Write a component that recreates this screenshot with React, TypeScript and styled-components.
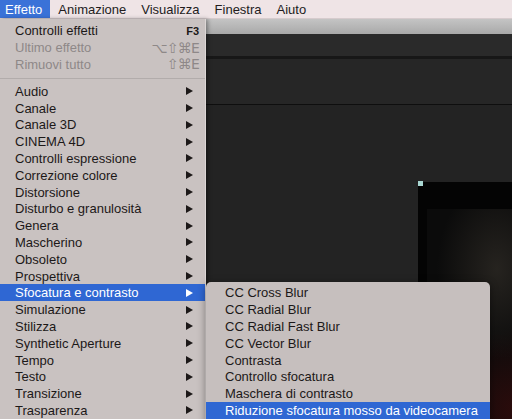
import React from 'react';
import styled, { createGlobalStyle } from 'styled-components';

const GlobalStyle = createGlobalStyle`
    html, body {
        margin: 0;
        padding: 0;
        background: #232323;
    }
    body {
        font-family: 'Liberation Sans', Arial, sans-serif;
        -webkit-font-smoothing: antialiased;
    }
`;

const Screen = styled.div`
    position: relative;
    display: flex;
    flex-direction: column;
    width: 512px;
    height: 419px;
    overflow: hidden;
`;

const MenuBar = styled.div`
    display: flex;
    align-items: stretch;
    height: 19px;
    background: #efe4e6;
    border-bottom: 1px solid #d6cbcd;
    box-sizing: border-box;
`;

const BarItem = styled.div<{ $active?: boolean }>`
    display: flex;
    align-items: center;
    padding: ${(p) => (p.$active ? '0 8px 0 5px' : '0')};
    margin-right: ${(p) => (p.$active ? '8px' : '15px')};
    font-size: 13px;
    color: ${(p) => (p.$active ? '#ffffff' : '#231c1d')};
    background: ${(p) => (p.$active ? '#3a72d8' : 'transparent')};
`;

const AppWindow = styled.div`
    flex: 1;
    display: flex;
    flex-direction: column;
`;

const TitleBar = styled.div`
    height: 15px;
    background: linear-gradient(#c4c4c4, #a9a9a9);
`;

const Toolbar = styled.div`
    height: 22px;
    background: #2a2a2a;
`;

const ToolbarEdge = styled.div`
    height: 3px;
    background: #171717;
`;

const Panel = styled.div`
    height: 45px;
    background: #262626;
    border-bottom: 1px solid #0e0e0e;
`;

const Workspace = styled.div`
    flex: 1;
    display: flex;
    padding: 77px 0 0 418px;
    background: #232323;
`;

const Composition = styled.div`
    position: relative;
    flex: 1;
    display: flex;
    padding: 27px 0 0 9px;
    background: #040404;
`;

const Handle = styled.div`
    position: absolute;
    left: 0;
    top: -1px;
    width: 5px;
    height: 5px;
    background: #a9d6d2;
`;

const Footage = styled.div`
    flex: 1;
    background:
        radial-gradient(ellipse 60px 90px at 70px 60px, rgba(60, 55, 48, 0.55), transparent),
        radial-gradient(ellipse 90px 80px at 90px 200px, rgba(70, 12, 12, 0.55), transparent),
        #0b0b0b;
`;

const Dropdown = styled.div`
    position: absolute;
    left: 0;
    top: 19px;
    width: 206px;
    height: 410px;
    padding-top: 3.5px;
    box-sizing: border-box;
    background: #c9c2c1;
    border-right: 1px solid #dcd6d5;
    box-shadow: 2px 0 4px rgba(0, 0, 0, 0.35);
`;

const SubMenu = styled.div`
    position: absolute;
    left: 206px;
    top: 282px;
    width: 284px;
    height: 160px;
    padding-top: 2.5px;
    box-sizing: border-box;
    background: #c6bfbe;
    border-radius: 5px;
    box-shadow: 0 2px 8px rgba(0, 0, 0, 0.45);
`;

const Row = styled.div<{ $selected?: boolean; $disabled?: boolean; $indent: number }>`
    display: flex;
    align-items: center;
    height: 16.8px;
    padding: 0 6px 0 ${(p) => p.$indent}px;
    font-size: 13px;
    white-space: nowrap;
    color: ${(p) => (p.$selected ? '#ffffff' : p.$disabled ? '#8e8888' : '#1c1818')};
    background: ${(p) => (p.$selected ? '#2f67d3' : 'transparent')};
`;

const Label = styled.span`
    flex: 1;
`;

const Shortcut = styled.span<{ $bold?: boolean }>`
    font-family: ${(p) => (p.$bold ? "'Liberation Sans', Arial, sans-serif" : "'DejaVu Sans', sans-serif")};
    font-size: ${(p) => (p.$bold ? '11px' : '14px')};
    font-weight: ${(p) => (p.$bold ? 700 : 400)};
    letter-spacing: ${(p) => (p.$bold ? '0' : '-0.8px')};
`;

const Arrow = styled.svg`
    width: 7px;
    height: 8px;
    margin-right: 6px;
    flex: none;
`;

const Separator = styled.div`
    height: 10px;
    display: flex;
    align-items: center;

    &::after {
        content: '';
        flex: 1;
        height: 1px;
        margin-top: 2px;
        background: #b2acab;
    }
`;

const topItems = [
    { label: 'Controlli effetti', shortcut: 'F3', bold: true },
    { label: 'Ultimo effetto', shortcut: '⌥⇧⌘E', disabled: true },
    { label: 'Rimuovi tutto', shortcut: '⇧⌘E', disabled: true },
];

const categories = [
    'Audio',
    'Canale',
    'Canale 3D',
    'CINEMA 4D',
    'Controlli espressione',
    'Correzione colore',
    'Distorsione',
    'Disturbo e granulosità',
    'Genera',
    'Mascherino',
    'Obsoleto',
    'Prospettiva',
    'Sfocatura e contrasto',
    'Simulazione',
    'Stilizza',
    'Synthetic Aperture',
    'Tempo',
    'Testo',
    'Transizione',
    'Trasparenza',
];

const blurEffects = [
    'CC Cross Blur',
    'CC Radial Blur',
    'CC Radial Fast Blur',
    'CC Vector Blur',
    'Contrasta',
    'Controllo sfocatura',
    'Maschera di contrasto',
    'Riduzione sfocatura mosso da videocamera',
];

function SubArrow({ color }: { color: string }) {
    return (
        <Arrow viewBox="0 0 7 8">
            <path d="M0 0 L7 4 L0 8 Z" fill={color} />
        </Arrow>
    );
}

export default function App() {
    return (
        <Screen>
            <GlobalStyle />
            <MenuBar>
                <BarItem $active>Effetto</BarItem>
                <BarItem>Animazione</BarItem>
                <BarItem>Visualizza</BarItem>
                <BarItem>Finestra</BarItem>
                <BarItem>Aiuto</BarItem>
            </MenuBar>
            <AppWindow>
                <TitleBar />
                <Toolbar />
                <ToolbarEdge />
                <Panel />
                <Workspace>
                    <Composition>
                        <Handle />
                        <Footage />
                    </Composition>
                </Workspace>
            </AppWindow>

            <Dropdown>
                {topItems.map((item) => (
                    <Row key={item.label} $indent={15} $disabled={item.disabled}>
                        <Label>{item.label}</Label>
                        <Shortcut $bold={item.bold}>{item.shortcut}</Shortcut>
                    </Row>
                ))}
                <Separator />
                {categories.map((name) => {
                    const selected = name === 'Sfocatura e contrasto';
                    return (
                        <Row key={name} $indent={15} $selected={selected}>
                            <Label>{name}</Label>
                            <SubArrow color={selected ? '#ffffff' : '#1c1818'} />
                        </Row>
                    );
                })}
            </Dropdown>

            <SubMenu>
                {blurEffects.map((name, i) => (
                    <Row key={name} $indent={19} $selected={i === blurEffects.length - 1}>
                        <Label>{name}</Label>
                    </Row>
                ))}
            </SubMenu>
        </Screen>
    );
}
